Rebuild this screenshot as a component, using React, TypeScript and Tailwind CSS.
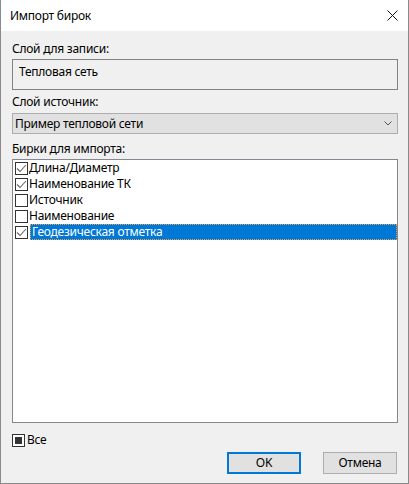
import React from "react";

const font = { fontFamily: '"Noto Sans", "Liberation Sans", sans-serif' };

type Item = { label: string; checked: boolean; selected?: boolean };

const items: Item[] = [
  { label: "Длина/Диаметр", checked: true },
  { label: "Наименование ТК", checked: true },
  { label: "Источник", checked: false },
  { label: "Наименование", checked: false },
  { label: "Геодезическая отметка", checked: true, selected: true },
];

function Check({ checked }: { checked: boolean }) {
  return (
    <span className="w-[13px] h-[13px] shrink-0 border border-[#333333] bg-white flex items-center justify-center">
      {checked && (
        <svg width="11" height="11" viewBox="0 0 11 11">
          <polyline points="1,5.5 4,8.5 10,2" fill="none" stroke="#666" strokeWidth="1.1" />
        </svg>
      )}
    </span>
  );
}

export default function App() {
  return (
    <div
      className="w-[409px] h-[484px] flex flex-col bg-[#f0f0f0] border-x border-b border-[#8a8a8a] text-[12px] leading-[16px] tracking-[-0.25px] text-black"
      style={font}
    >
      {/* Title bar */}
      <div className="h-[31px] shrink-0 bg-white flex items-center justify-between pl-[9px] pr-[9px]">
        <span className="text-[12px]">Импорт бирок</span>
        <svg width="11" height="11" viewBox="0 0 11 11" className="mr-[1px]">
          <path d="M0.5 0.5 L10.5 10.5 M10.5 0.5 L0.5 10.5" stroke="#111" strokeWidth="1" />
        </svg>
      </div>

      {/* Body */}
      <div className="flex-1 flex flex-col pl-[11px] pr-[10px] pt-[10px] pb-[9px]">
        <div className="h-[16px]">Слой для записи:</div>
        <div className="mt-[2px] h-[31px] border border-[#828282] bg-[#f0f0f0] pl-[6px] pt-[4px]">
          Тепловая сеть
        </div>

        <div className="mt-[4px] h-[16px]">Слой источник:</div>
        <div className="mt-[3px] h-[21px] border border-[#adadad] bg-[#e1e1e1] flex items-center justify-between pl-[2px] pr-[5px]">
          <span>Пример тепловой сети</span>
          <svg width="8" height="5" viewBox="0 0 8 5">
            <polyline points="0.5,0.5 4,4 7.5,0.5" fill="none" stroke="#555" strokeWidth="1" />
          </svg>
        </div>

        <div className="mt-[7px] h-[16px]">Бирки для импорта:</div>
        <div className="mt-[2px] h-[264px] border border-[#828790] bg-white flex flex-col">
          {items.map((it) => (
            <div key={it.label} className="h-[16px] flex items-center pl-[2px]">
              <Check checked={it.checked} />
              {it.selected ? (
                <span className="flex-1 ml-[2px] h-[16px] bg-[#0078d7] text-white border border-dotted border-[#f0a040] flex items-center pl-[1px]">
                  {it.label}
                </span>
              ) : (
                <span className="ml-[1px]">{it.label}</span>
              )}
            </div>
          ))}
        </div>

        <div className="mt-[9px] h-[16px] flex items-center">
          <span className="w-[13px] h-[13px] border border-[#333333] bg-white flex items-center justify-center">
            <span className="w-[7px] h-[7px] bg-[#333333]" />
          </span>
          <span className="ml-[2px]">Все</span>
        </div>

        <div className="mt-[4px] flex justify-end gap-[22px] mr-[1px]">
          <button className="w-[74px] h-[22px] border-2 border-[#0078d7] bg-[#e1e1e1] flex items-center justify-center">
            OK
          </button>
          <button className="w-[74px] h-[22px] border border-[#adadad] bg-[#e1e1e1] flex items-center justify-center">
            Отмена
          </button>
        </div>
      </div>
    </div>
  );
}
